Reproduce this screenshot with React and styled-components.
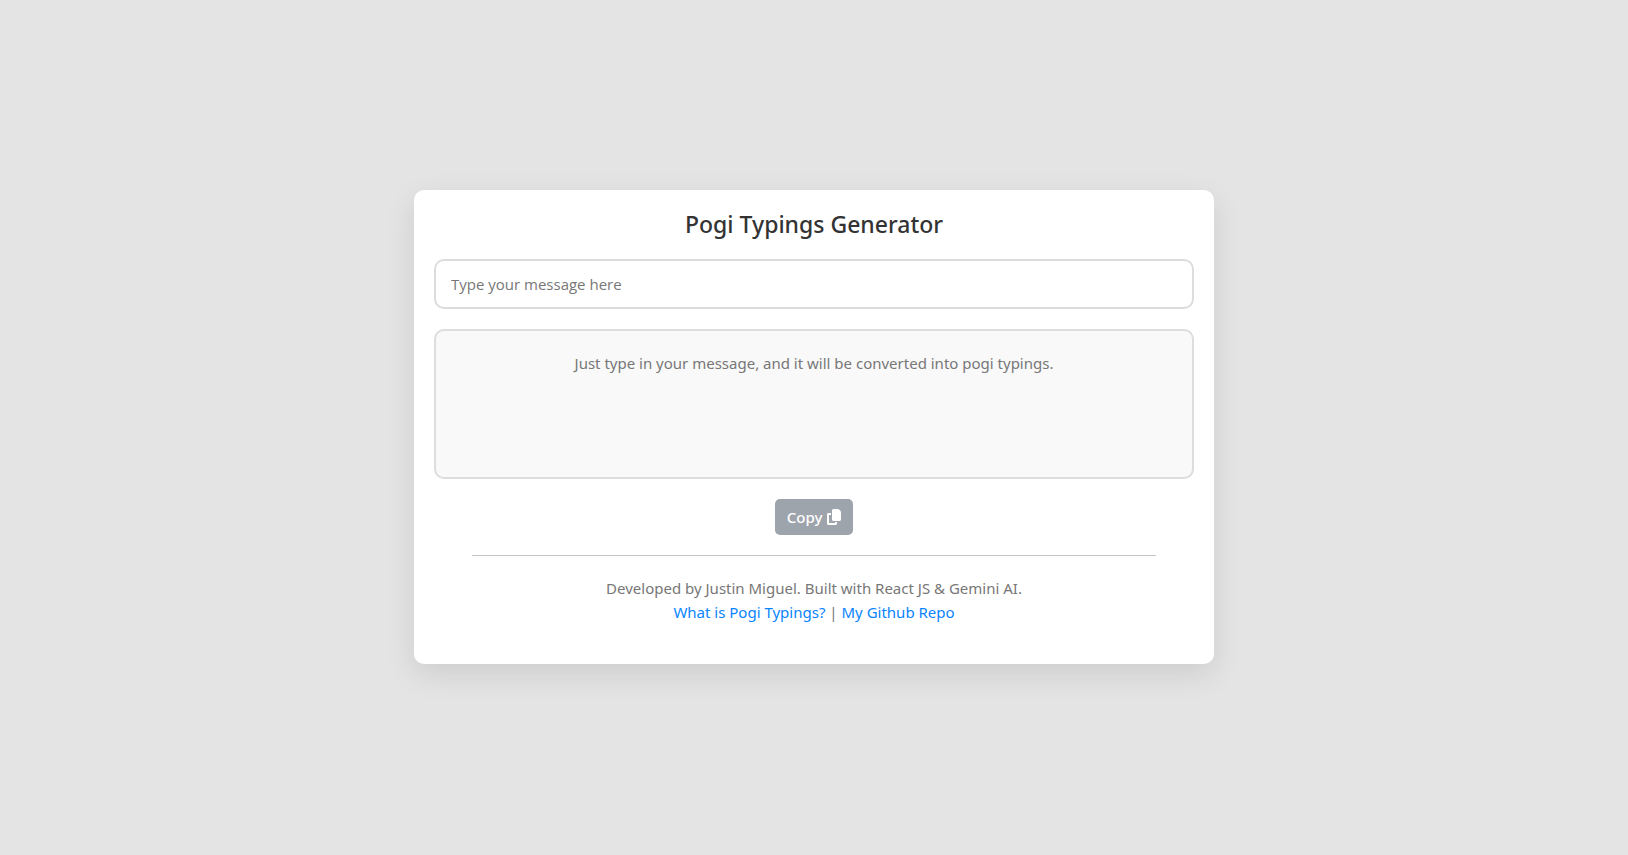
import React, { useState } from "react";
import styled, { createGlobalStyle } from "styled-components";

const GlobalStyle = createGlobalStyle`
  *, *::before, *::after { box-sizing: border-box; }
  body {
    margin: 0;
    background: #e4e4e4;
    color: #777;
    font-family: "Segoe UI", "Noto Sans", "Open Sans", sans-serif;
    font-size: 15px;
    line-height: 24px;
  }
`;

const Page = styled.main`
  min-height: 100vh;
  padding-bottom: 1px;
  display: flex;
  align-items: center;
  justify-content: center;
`;

const Card = styled.section`
  width: 100%;
  max-width: 800px;
  padding: 20px;
  display: flex;
  flex-direction: column;
  align-items: center;
  gap: 20px;
  background: #fff;
  border-radius: 10px;
  box-shadow: 0 10px 30px rgba(0, 0, 0, 0.1);
  text-align: center;
`;

const Title = styled.h1`
  margin: 0;
  color: #333;
  font-size: 23px;
  font-weight: 500;
  line-height: 29px;
`;

const MessageInput = styled.input`
  width: 100%;
  height: 50px;
  padding: 0 15px;
  border: 2px solid #ddd;
  border-radius: 10px;
  background: #fff;
  color: #333;
  font: inherit;
  font-family: "Segoe UI", "Open Sans", sans-serif;
  outline: none;

  &::placeholder { color: #777; opacity: 1; }
  &:focus { border-color: #007bff; }
`;

const Output = styled.output`
  display: block;
  width: 100%;
  min-height: 150px;
  padding: 20px;
  border: 2px solid #ddd;
  border-radius: 10px;
  background: #f9f9f9;
  overflow-wrap: anywhere;
`;

const CopyButton = styled.button`
  display: flex;
  align-items: center;
  gap: 5px;
  height: 36px;
  padding: 0 12px;
  border: 0;
  border-radius: 5px;
  background: #6c757d;
  color: #fff;
  font: inherit;
  font-weight: 500;
  cursor: pointer;

  &:disabled { background: #9ea4ab; cursor: default; }
`;

const IconSvg = styled.svg`
  width: 14px;
  height: 16px;
  fill: currentColor;
`;

const Divider = styled.hr`
  width: 90%;
  margin: 0;
  border: 0;
  border-top: 1px solid #c4c4c4;
`;

const Footer = styled.footer`
  margin-bottom: 20px;
`;

const Credit = styled.p`
  margin: 0;
`;

const FooterLink = styled.a`
  color: #0a84ff;
  text-decoration: none;

  &:hover { text-decoration: underline; }
`;

function CopyIcon() {
  return (
    <IconSvg viewBox="0 0 448 512" aria-hidden="true">
      <path d="M208 0H350c18 0 34 8 46 20l32 32c12 12 20 28 20 46V336c0 26.500-21.500 48-48 48H208c-26.500 0-48-21.500-48-48V48c0-26.500 21.500-48 48-48zM48 128h80v64H64V448H256V416h64v48c0 26.500-21.500 48-48 48H48c-26.500 0-48-21.500-48-48V176c0-26.500 21.500-48 48-48z" />
    </IconSvg>
  );
}

export default function App() {
  const [message, setMessage] = useState("");

  return (
    <>
      <GlobalStyle />
      <Page>
        <Card>
          <Title>Pogi Typings Generator</Title>
          <MessageInput
            id="message"
            type="text"
            aria-label="Type your message here"
            placeholder="Type your message here"
            value={message}
            onChange={(event) => setMessage(event.target.value)}
          />
          <Output htmlFor="message">
            {message || "Just type in your message, and it will be converted into pogi typings."}
          </Output>
          <CopyButton
            type="button"
            disabled={!message}
            onClick={() => navigator.clipboard.writeText(message)}
          >
            Copy <CopyIcon />
          </CopyButton>
          <Divider />
          <Footer>
            <Credit>Developed by Justin Miguel. Built with React JS &amp; Gemini AI.</Credit>
            <Credit>
              <FooterLink href="#about">What is Pogi Typings?</FooterLink> |{" "}
              <FooterLink href="#repo">My Github Repo</FooterLink>
            </Credit>
          </Footer>
        </Card>
      </Page>
    </>
  );
}
